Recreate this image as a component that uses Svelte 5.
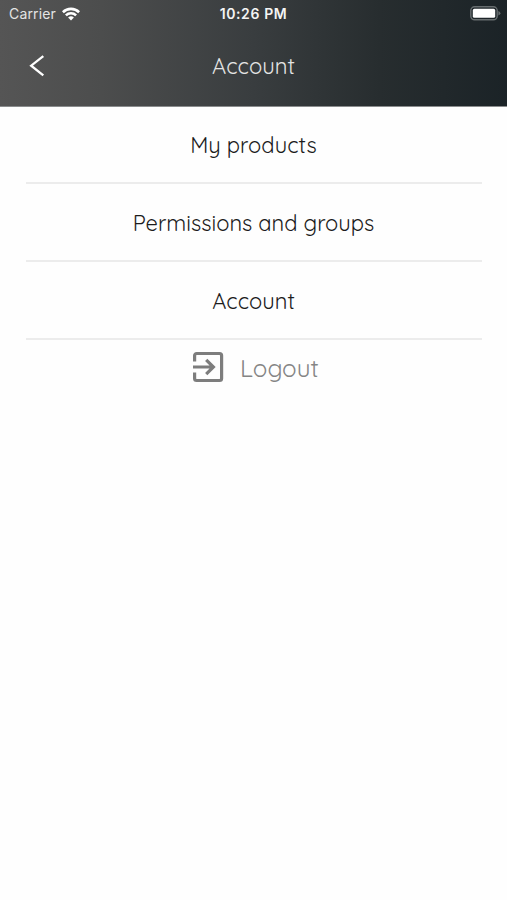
<script lang="ts">
	interface MenuItem {
		id: string;
		label: string;
	}

	const items: MenuItem[] = [
		{ id: 'products', label: 'My products' },
		{ id: 'permissions', label: 'Permissions and groups' },
		{ id: 'account', label: 'Account' }
	];
</script>

<div class="screen">
	<header>
		<div class="status-bar">
			<div class="carrier">
				<span>Carrier</span>
				<svg width="18" height="14" viewBox="0 0 18 14" fill="none" stroke="#fff" stroke-width="2.6">
					<path d="M0.9 5.2a11.6 11.6 0 0 1 16.2 0" />
					<path d="M3.9 8.4a7.3 7.3 0 0 1 10.2 0" />
					<path d="M9 13.6l-2.9-3a4.2 4.2 0 0 1 5.8 0z" fill="#fff" stroke="none" />
				</svg>
			</div>
			<span class="time">10:26 PM</span>
			<div class="battery">
				<svg width="31" height="15" viewBox="0 0 31 15">
					<rect x="0.8" y="0.8" width="26.4" height="13" rx="3.8" fill="none" stroke="#676d6f" stroke-width="1.4" />
					<rect x="2.8" y="2.8" width="22.4" height="9" rx="1.6" fill="#fff" />
					<path d="M28.4 5.1q2 0.8 2 2.2t-2 2.2z" fill="#676d6f" />
				</svg>
			</div>
		</div>
		<div class="nav-bar">
			<button class="back" aria-label="Back">
				<svg width="16" height="22" viewBox="0 0 16 22" fill="none" stroke="#fff" stroke-width="2.3">
					<path d="M14.3 1.2L2.2 10.7l12.1 9.6" />
				</svg>
			</button>
			<h1>Account</h1>
		</div>
	</header>

	<nav>
		{#each items as item (item.id)}
			<button class="menu-item"><span>{item.label}</span></button>
		{/each}
	</nav>

	<button class="logout">
		<svg width="32" height="32" viewBox="0 0 32 32" fill="none" stroke="#7d7d7d" stroke-width="3.2">
			<path d="M2.6 10.5V4.5a2 2 0 0 1 2-2h23a2 2 0 0 1 2 2v23a2 2 0 0 1-2 2h-23a2 2 0 0 1-2-2v-6" />
			<path d="M1 16h20M14.2 8.8l7.2 7.2-7.2 7.2" />
		</svg>
		<span>Logout</span>
	</button>
</div>

<style>
	:global(body) {
		background: #fefefe;
	}

	.screen {
		min-height: 900px;
		background: #fefefe;
		font-family: Quicksand, Lato, sans-serif;
	}

	header {
		box-sizing: border-box;
		height: 107px;
		color: #fff;
		background: linear-gradient(90deg, #555 0%, #4c4d4d 20%, #393d3f 50%, #272d2f 75%, #1b2327 100%);
		border-bottom: 1px solid #8a8c8d;
	}

	button {
		margin: 0;
		padding: 0;
		border: none;
		background: none;
		font-family: inherit;
		cursor: pointer;
	}

	svg {
		display: block;
	}

	.status-bar {
		display: grid;
		grid-template-columns: 1fr auto 1fr;
		align-items: center;
		height: 27px;
		padding: 0 6px 0 9px;
		font-family: Inter, sans-serif;
		font-size: 14px;
	}

	.carrier {
		display: flex;
		align-items: center;
		gap: 6px;
		color: #e4e4e4;
		letter-spacing: 0.15px;
	}

	.time {
		margin-right: 3px;
		color: #f4f4f4;
		font-weight: 600;
		letter-spacing: 0.6px;
	}

	.battery {
		display: flex;
		justify-content: flex-end;
	}

	.nav-bar {
		display: grid;
		grid-template-columns: 60px 1fr 60px;
		align-items: center;
		height: 78px;
	}

	.back {
		padding-left: 29px;
	}

	h1 {
		margin: 0;
		padding-bottom: 1px;
		text-align: center;
		font-size: 22px;
		font-weight: 400;
		color: #e4e4e4;
	}

	nav {
		padding: 0 25px 0 26px;
	}

	.menu-item {
		display: flex;
		justify-content: center;
		align-items: center;
		box-sizing: border-box;
		width: 100%;
		height: 78px;
		padding: 2px 1px 0 0;
		border-bottom: 2px solid #ececec;
		font-size: 21.9px;
		line-height: 28px;
		color: #1c1c1c;
	}

	.menu-item:first-child {
		height: 77px;
		padding-top: 0;
	}

	.logout {
		display: flex;
		align-items: center;
		gap: 16px;
		margin: 11px 0 0 192px;
		font-size: 24.2px;
		line-height: 32px;
		color: #858585;
	}

	.logout span {
		padding-top: 1px;
		margin-bottom: -1px;
	}
</style>
